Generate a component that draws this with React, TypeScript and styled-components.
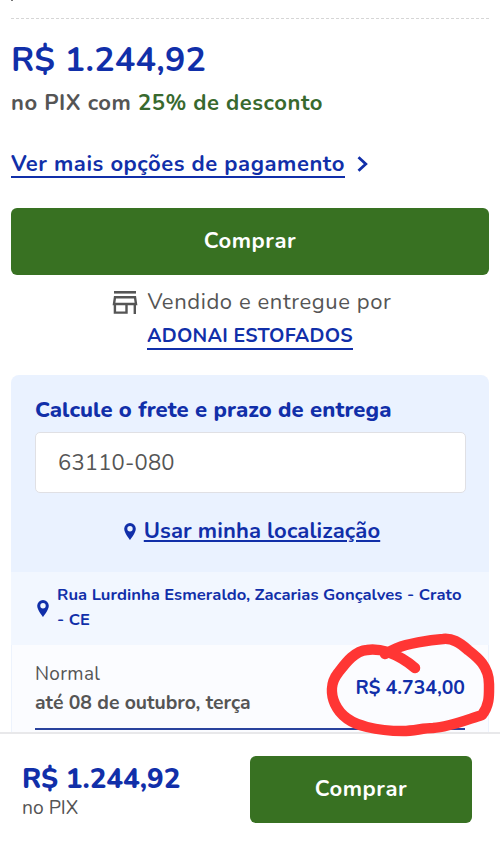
import React from 'react';
import styled, { createGlobalStyle } from 'styled-components';

const blue = '#112fa9'
const green = '#387122'
const gray = '#555555'

const GlobalStyle = createGlobalStyle`
  * {
    box-sizing: border-box;
  }
  body {
    margin: 0;
    background-color: white;
    font-family: Nunito, Lato, 'Open Sans', sans-serif;
    color: ${gray};
  }
`

interface ITextProps {
  $size: number;
  $line: number;
  $weight?: number;
  $color?: string;
  $spacing?: number;
}

const Text = styled.div<ITextProps>`
  font-size: ${p => p.$size}px;
  line-height: ${p => p.$line}px;
  font-weight: ${p => p.$weight || 400};
  color: ${p => p.$color || gray};
  letter-spacing: ${p => p.$spacing || 0}px;
  white-space: nowrap;
`

const Page = styled.div`
  position: relative;
  display: flex;
  flex-direction: column;
  width: 500px;
  height: 845px;
  overflow: hidden;
`

const Content = styled.main`
  flex: 1;
  min-height: 0;
  padding: 0 11px;
  overflow: hidden;
`

const Cut = styled.div`
  width: 2px;
  height: 1px;
  background-color: #777;
`

const Divider = styled.div`
  margin-top: 17px;
  border-top: 1px dashed #d6d6d6;
`

const PixPrice = styled.div`
  padding-top: 18px;
`

const Discount = styled.span`
  color: #38692e;
`

const PaymentLink = styled.a`
  display: flex;
  align-items: center;
  gap: 12px;
  margin: 29px 0 30px;
  color: ${blue};
`

const Underlined = styled(Text)`
  border-bottom: 2px solid ${blue};
`

const StoreName = styled(Underlined)`
  margin-top: 7px;
`

const BuyButton = styled.button<{ $width?: string }>`
  display: block;
  width: ${p => p.$width || '100%'};
  height: 67px;
  padding: 0 0 1px;
  border: 0;
  border-radius: 6px;
  background-color: ${green};
  color: white;
  font-family: inherit;
  font-size: 22px;
  font-weight: 700;
  letter-spacing: 0.55px;
`

const Seller = styled.div`
  display: flex;
  flex-direction: column;
  align-items: center;
  margin-top: 12px;
`

const SellerRow = styled.div`
  display: flex;
  align-items: center;
  gap: 9px;
  padding-left: 4px;
`

const Freight = styled.section`
  height: 197px;
  margin-top: 25px;
  padding: 20px 23px 0 24px;
  border-radius: 8px 8px 0 0;
  background-color: #eaf2ff;
`

const ZipInput = styled.div`
  display: flex;
  align-items: center;
  height: 61px;
  margin-top: 7px;
  padding-left: 22px;
  border: 1px solid #e0e0e4;
  border-radius: 5px;
  background-color: white;
`

const LocationLink = styled.a`
  display: flex;
  justify-content: center;
  align-items: center;
  gap: 8px;
  margin-top: 23px;
  padding-left: 3px;
`

const LinkText = styled(Text)`
  text-decoration: underline;
  text-decoration-thickness: 2px;
  text-underline-offset: 2px;
`

const Address = styled.div`
  display: flex;
  align-items: center;
  gap: 8px;
  height: 73px;
  padding: 0 20px 0 26px;
  background-color: #f2f7ff;
`

const AddressText = styled(Text)`
  padding-bottom: 3px;
  white-space: normal;
`

const Delivery = styled.div`
  height: 100px;
  padding: 12px 23px 0;
  border: 1px solid #edf3fd;
  border-top: 0;
  background-color: #fbfcff;
`

const DeliveryRow = styled.div`
  display: flex;
  justify-content: space-between;
  align-items: center;
  height: 73px;
  padding-bottom: 10px;
  border-bottom: 2px solid #29429d;
`

const Footer = styled.footer`
  display: flex;
  justify-content: space-between;
  height: 113px;
  padding: 22px 28px 0 22px;
  border-top: 2px solid #e8e8ea;
  background-color: white;
`

const FooterPrice = styled.div`
  padding-top: 6px;
`

const Scribble = styled.svg`
  position: absolute;
  left: 320px;
  top: 628px;
`

const Pin = () => (
  <svg width="12" height="17" viewBox="0 0 12 17">
    <path fill={blue} fillRule="evenodd" d="M6 0a5.8 5.8 0 0 0-5.8 5.8C.2 10 6 17 6 17s5.8-7 5.8-11.2A5.8 5.8 0 0 0 6 0Zm0 3.1a2.7 2.7 0 1 1 0 5.4 2.7 2.7 0 0 1 0-5.4Z" />
  </svg>
)

const Chevron = () => (
  <svg width="11" height="18" viewBox="0 0 11 18">
    <path d="M1.5 1.2 8.8 8l-7.3 6.8" fill="none" stroke={blue} strokeWidth="2.8" />
  </svg>
)

const StoreIcon = () => (
  <svg width="26" height="23" viewBox="0 0 26 23" fill="none" stroke={gray} strokeWidth="2.4">
    <path d="M2 1.3h22" strokeWidth="2.6" />
    <path d="M3 6.2h20l1 6.8H2ZM2.9 13v8.6h11.6V13M22.8 13v10" />
  </svg>
)

export default function App() {
  return (
    <Page>
      <GlobalStyle />
      <Content>
        <Cut />
        <Divider />

        {/* 价格 */}
        <PixPrice>
          <Text $size={34} $line={46} $weight={700} $color={blue} $spacing={0.28}>R$ 1.244,92</Text>
          <Text $size={22} $line={40} $weight={700} $spacing={0.55}>
            no PIX com <Discount>25% de desconto</Discount>
          </Text>
        </PixPrice>
        <PaymentLink>
          <Underlined $size={22} $line={24} $weight={700} $color={blue} $spacing={0.55}>Ver mais opções de pagamento</Underlined>
          <Chevron />
        </PaymentLink>
        <BuyButton>Comprar</BuyButton>

        {/* 卖家 */}
        <Seller>
          <SellerRow>
            <StoreIcon />
            <Text $size={22} $line={30} $spacing={0.6}>Vendido e entregue por</Text>
          </SellerRow>
          <StoreName $size={19.6} $line={24} $weight={700} $color={blue} $spacing={0.22}>ADONAI ESTOFADOS</StoreName>
        </Seller>

        {/* 运费 */}
        <Freight>
          <Text $size={22} $line={30} $weight={800} $color={blue} $spacing={0.1}>Calcule o frete e prazo de entrega</Text>
          <ZipInput>
            <Text $size={22} $line={30} $spacing={0.2}>63110-080</Text>
          </ZipInput>
          <LocationLink>
            <Pin />
            <LinkText $size={22} $line={30} $weight={700} $color={blue} $spacing={0.1}>Usar minha localização</LinkText>
          </LocationLink>
        </Freight>
        <Address>
          <Pin />
          <AddressText $size={16.6} $line={25} $weight={700} $color={blue} $spacing={0.03}>
            Rua Lurdinha Esmeraldo, Zacarias Gonçalves - Crato<br />- CE
          </AddressText>
        </Address>
        <Delivery>
          <DeliveryRow>
            <div>
              <Text $size={19} $line={30} $spacing={0.3}>Normal</Text>
              <Text $size={19.4} $line={28} $weight={700}>até 08 de outubro, terça</Text>
            </div>
            <Text $size={19.4} $line={30} $weight={700} $color={blue}>R$ 4.734,00</Text>
          </DeliveryRow>
        </Delivery>
      </Content>

      <Footer>
        <FooterPrice>
          <Text $size={27.8} $line={34} $weight={800} $color={blue}>R$ 1.244,92</Text>
          <Text $size={19.3} $line={24}>no PIX</Text>
        </FooterPrice>
        <BuyButton $width="222px">Comprar</BuyButton>
      </Footer>

      <Scribble width="180" height="115" viewBox="320 628 180 115">
        <path
          d="M415 668C407 661 399 656 388 652C381 650 374 649 367 650C354 651 345 664 338 673C330 683 331 695 335 704C341 717 354 724 367 727C379 730 391 731 403 731C414 731 423 728 433 728C449 727 466 720 482 715C490 705 489 694 489 684C489 666 477 657 468 650C459 642 452 638 443 639C428 640 407 644 397 648Q390 651 385 654"
          fill="none"
          stroke="#ff3634"
          strokeWidth="10.5"
          strokeLinecap="round"
          strokeLinejoin="round"
        />
      </Scribble>
    </Page>
  )
}
